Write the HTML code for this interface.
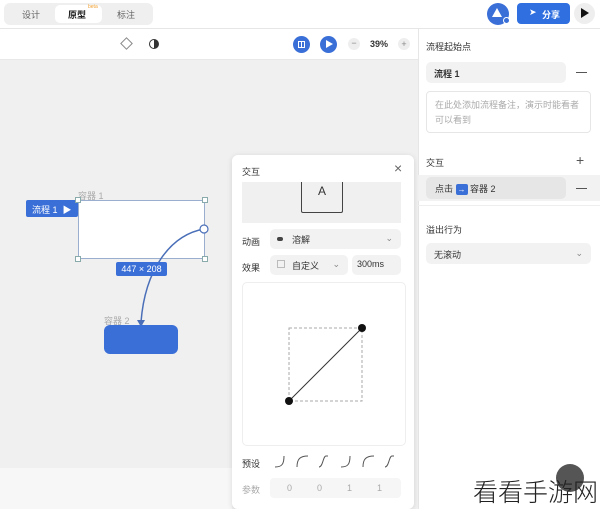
<!DOCTYPE html>
<html><head><meta charset="utf-8"><style>
*{box-sizing:border-box;margin:0;padding:0}
html,body{width:600px;height:509px;overflow:hidden}
body{position:relative;background:#f0f0f0;font-family:"Liberation Sans","Noto Sans CJK SC",sans-serif;font-size:9px;color:#333}
.a{position:absolute;white-space:nowrap}
.gray{background:#f2f2f2;border-radius:5px}
</style></head><body>
<div class="a" style="left:0;top:0;width:600px;height:29px;background:#fff;border-bottom:1px solid #e6e6e6"></div>
<div class="a" style="left:4px;top:3px;width:149px;height:22px;background:#efefef;border-radius:6px"></div>
<div class="a" style="left:55px;top:5px;width:47px;height:18px;background:#fff;border-radius:5px"></div>
<div class="a" style="left:22px;top:8px;color:#666">设计</div>
<div class="a" style="left:68px;top:8px;font-weight:bold;color:#222">原型</div>
<div class="a" style="left:88px;top:4px;font-size:5px;color:#f0a030">beta</div>
<div class="a" style="left:117px;top:8px;color:#666">标注</div>
<div class="a" style="left:487px;top:3px;width:22px;height:22px;border-radius:50%;background:#3a6fd8"></div>
<div class="a" style="left:492px;top:8px;border-bottom:9px solid #fff;border-left:5px solid transparent;border-right:5px solid transparent"></div>
<div class="a" style="left:503px;top:17px;width:7px;height:7px;border-radius:50%;background:#3a6fd8;border:1.5px solid #fff"></div>
<div class="a" style="left:517px;top:3px;width:53px;height:21px;background:#2f6fe0;border-radius:4px;color:#fff;padding:5px 0 0 25px;font-weight:bold">分享</div>
<div class="a" style="left:529px;top:7px;color:#fff;font-size:9px">➤</div>
<div class="a" style="left:574px;top:3px;width:21px;height:21px;border-radius:50%;background:#eee"></div>
<div class="a" style="left:581px;top:8px;width:0;height:0;border-left:8px solid #111;border-top:5px solid transparent;border-bottom:5px solid transparent"></div>
<div class="a" style="left:0;top:29px;width:418px;height:31px;background:#fff;border-bottom:1px solid #e8e8e8"></div>
<div class="a" style="left:122px;top:39px;width:9px;height:9px;border:1.5px solid #888;transform:rotate(45deg)"></div>
<div class="a" style="left:149px;top:39px;width:10px;height:10px;border-radius:50%;background:linear-gradient(90deg,#fff 50%,#333 50%);border:1.5px solid #333"></div>
<div class="a" style="left:293px;top:36px;width:17px;height:17px;border-radius:50%;background:#3a6fd8"></div>
<div class="a" style="left:298px;top:41px;width:7px;height:7px;border:1px solid #fff;background:linear-gradient(90deg,transparent 2px,#fff 2px,#fff 3px,transparent 3px)"></div>
<div class="a" style="left:320px;top:36px;width:17px;height:17px;border-radius:50%;background:#3a6fd8"></div>
<div class="a" style="left:326px;top:40px;border-left:7px solid #fff;border-top:4.5px solid transparent;border-bottom:4.5px solid transparent"></div>
<div class="a" style="left:348px;top:38px;width:12px;height:12px;border-radius:50%;background:#eee;text-align:center;line-height:11px;color:#888">−</div>
<div class="a" style="left:370px;top:39px;font-weight:bold;color:#333">39%</div>
<div class="a" style="left:398px;top:38px;width:12px;height:12px;border-radius:50%;background:#eee;text-align:center;line-height:12px;color:#888">+</div>
<div class="a" style="left:418px;top:29px;width:182px;height:480px;background:#fff;border-left:1px solid #e6e6e6"></div>
<div class="a" style="left:426px;top:40px">流程起始点</div>
<div class="a gray" style="left:426px;top:62px;width:140px;height:21px;padding:5px 0 0 8px;font-weight:bold">流程 1</div>
<div class="a" style="left:576px;top:72px;width:11px;height:1px;background:#555"></div>
<div class="a" style="left:426px;top:91px;width:165px;height:42px;border:1px solid #e6e6e6;border-radius:4px;padding:6px 8px;color:#aaa;line-height:15px;white-space:normal">在此处添加流程备注，演示时能看者可以看到</div>
<div class="a" style="left:426px;top:156px">交互</div>
<div class="a" style="left:576px;top:154px;font-size:14px;color:#555;line-height:12px">+</div>
<div class="a" style="left:418px;top:175px;width:182px;height:26px;background:#f2f2f2"></div>
<div class="a" style="left:426px;top:177px;width:140px;height:22px;background:#e6e6e6;border-radius:5px;padding:5px 0 0 9px">点击 <span style="display:inline-block;width:12px;height:11px;background:#3a6fd8;color:#fff;border-radius:2px;text-align:center;line-height:11px;font-size:8px">→</span> 容器 2</div>
<div class="a" style="left:576px;top:188px;width:11px;height:1px;background:#555"></div>
<div class="a" style="left:418px;top:205px;width:182px;height:1px;background:#eee"></div>
<div class="a" style="left:426px;top:223px">溢出行为</div>
<div class="a gray" style="left:426px;top:243px;width:165px;height:21px;padding:5px 0 0 8px">无滚动<span style="position:absolute;right:8px;color:#888">⌄</span></div>
<!-- canvas -->
<div class="a" style="left:78px;top:200px;width:127px;height:59px;background:#fff;border:1px solid #9aaed0"></div>
<div class="a" style="left:78px;top:189px;color:#aaa">容器 1</div>
<div class="a" style="left:26px;top:200px;width:52px;height:17px;background:#3a6fd8;color:#fff;border-radius:2px;padding:3px 0 0 6px">流程 1 &nbsp;▶</div>
<div class="a" style="left:75px;top:197px;width:6px;height:6px;background:#fff;border:1px solid #8aa"></div>
<div class="a" style="left:202px;top:197px;width:6px;height:6px;background:#fff;border:1px solid #8aa"></div>
<div class="a" style="left:75px;top:256px;width:6px;height:6px;background:#fff;border:1px solid #8aa"></div>
<div class="a" style="left:202px;top:256px;width:6px;height:6px;background:#fff;border:1px solid #8aa"></div>
<svg class="a" style="left:0;top:0" width="600" height="509"><path d="M204 229 C170 235 145 270 141 322" fill="none" stroke="#4a6fb8" stroke-width="1.5"/><circle cx="204" cy="229" r="4" fill="#fff" stroke="#4a6fb8" stroke-width="1.2"/><path d="M137 320 L141 327 L145 320Z" fill="#4a6fb8"/></svg>
<div class="a" style="left:116px;top:262px;width:51px;height:14px;background:#3a6fd8;color:#fff;border-radius:2px;text-align:center;line-height:14px">447 × 208</div>
<div class="a" style="left:104px;top:314px;color:#aaa">容器 2</div>
<div class="a" style="left:104px;top:325px;width:74px;height:29px;background:#3a6fd8;border-radius:6px"></div>
<div class="a" style="left:0;top:468px;width:232px;height:41px;background:#f7f7f7"></div>
<!-- interaction panel -->
<div class="a" style="left:232px;top:155px;width:182px;height:354px;background:#fff;border-radius:6px;box-shadow:0 1px 6px rgba(0,0,0,.12)"></div>
<div class="a" style="left:242px;top:165px">交互</div>
<div class="a" style="left:394px;top:160px;font-size:14px;color:#666">×</div>
<div class="a" style="left:242px;top:182px;width:159px;height:41px;background:#f0f0f0"></div>
<div class="a" style="left:301px;top:182px;width:42px;height:31px;border:1px solid #444;border-top:none;border-radius:0 0 2px 2px;background:#f0f0f0;text-align:center;font-size:12px;padding-top:2px">A</div>
<div class="a" style="left:242px;top:235px">动画</div>
<div class="a gray" style="left:270px;top:229px;width:131px;height:20px;padding:4px 0 0 22px">溶解<span style="position:absolute;right:8px;color:#888">⌄</span></div>
<div class="a" style="left:277px;top:237px;width:6px;height:4px;border-radius:2px;background:#444"></div>
<div class="a" style="left:242px;top:261px">效果</div>
<div class="a gray" style="left:270px;top:255px;width:78px;height:20px;padding:4px 0 0 22px">自定义<span style="position:absolute;right:8px;color:#888">⌄</span></div>
<div class="a" style="left:277px;top:260px;width:8px;height:8px;border:1px solid #bbb"></div>
<div class="a gray" style="left:352px;top:255px;width:49px;height:20px;padding:4px 0 0 5px">300ms</div>
<div class="a" style="left:242px;top:282px;width:164px;height:164px;border:1px solid #eee;border-radius:5px"></div>
<svg class="a" style="left:232px;top:282px" width="182" height="164"><rect x="57" y="46" width="73" height="73" fill="none" stroke="#aaa" stroke-dasharray="3 2"/><line x1="57" y1="119" x2="130" y2="46" stroke="#333"/><circle cx="57" cy="119" r="4" fill="#111"/><circle cx="130" cy="46" r="4" fill="#111"/></svg>
<div class="a" style="left:242px;top:457px">预设</div>
<svg class="a" style="left:270px;top:452px" width="132" height="18" fill="none" stroke="#555" stroke-width="1"><path d="M5 15 C12 15 14 12 14 4"/><path d="M27 15 C27 7 30 4 38 4"/><path d="M49 15 C53 15 53 4 56 4 L58 4"/><path d="M71 15 C78 15 80 12 80 4"/><path d="M93 15 C93 7 96 4 104 4"/><path d="M115 15 C119 15 119 4 122 4 L124 4"/></svg>
<div class="a" style="left:242px;top:483px;color:#aaa">参数</div>
<div class="a" style="left:270px;top:478px;width:131px;height:20px;background:#f6f6f6;border-radius:4px;color:#aaa"><span class="a" style="left:17px;top:5px">0</span><span class="a" style="left:47px;top:5px">0</span><span class="a" style="left:77px;top:5px">1</span><span class="a" style="left:107px;top:5px">1</span></div>
<div class="a" style="left:556px;top:464px;width:28px;height:28px;border-radius:50%;background:#555"></div>
<div class="a" style="left:473px;top:476px;font-size:25px;color:#222;font-family:'Noto Sans CJK SC',sans-serif;font-weight:300;line-height:30px">看看手游网</div>
</body></html>
